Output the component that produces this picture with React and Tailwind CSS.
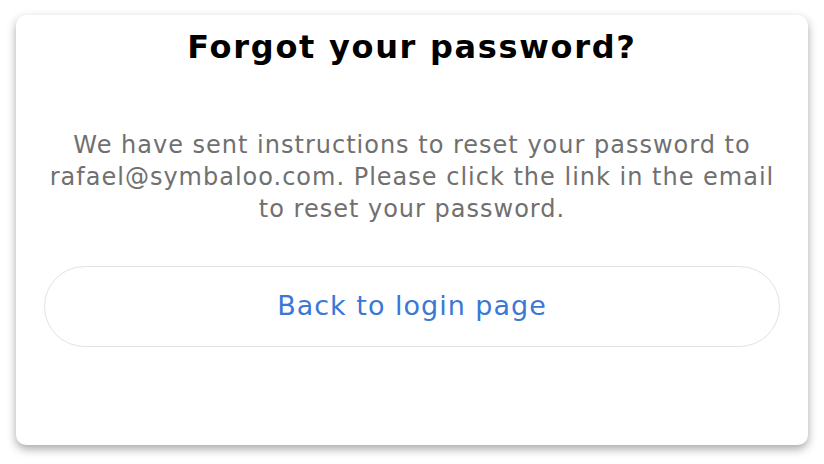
import React from 'react';

const App = () => {
    return (
        <div className="w-[824px] h-[464px] bg-white pt-[15px] pl-[16px]">
            <div
                className="w-[792px] h-[430px] bg-white rounded-[10px] shadow-[0_4px_10px_rgba(0,0,0,0.35)] flex flex-col items-center px-[28px]"
                style={{ fontFamily: '"DejaVu Sans", sans-serif' }}
            >
                {/* Title */}
                <h1 className="mt-[12px] text-[32px] leading-[40px] font-bold text-black tracking-[1.7px]">
                    Forgot your password?
                </h1>

                {/* Message */}
                <p className="mt-[62px] text-[24px] leading-[32px] text-[#707070] text-center tracking-[1px] whitespace-nowrap">
                    We have sent instructions to reset your password to
                    <br />
                    rafael@symbaloo.com. Please click the link in the email
                    <br />
                    to reset your password.
                </p>

                {/* Back button */}
                <button className="mt-[41px] w-full h-[81px] rounded-full border border-[#e2e2e2] bg-white text-[27px] tracking-[1px] text-[#3a78d6]">
                    Back to login page
                </button>
            </div>
        </div>
    );
};

export default App;
